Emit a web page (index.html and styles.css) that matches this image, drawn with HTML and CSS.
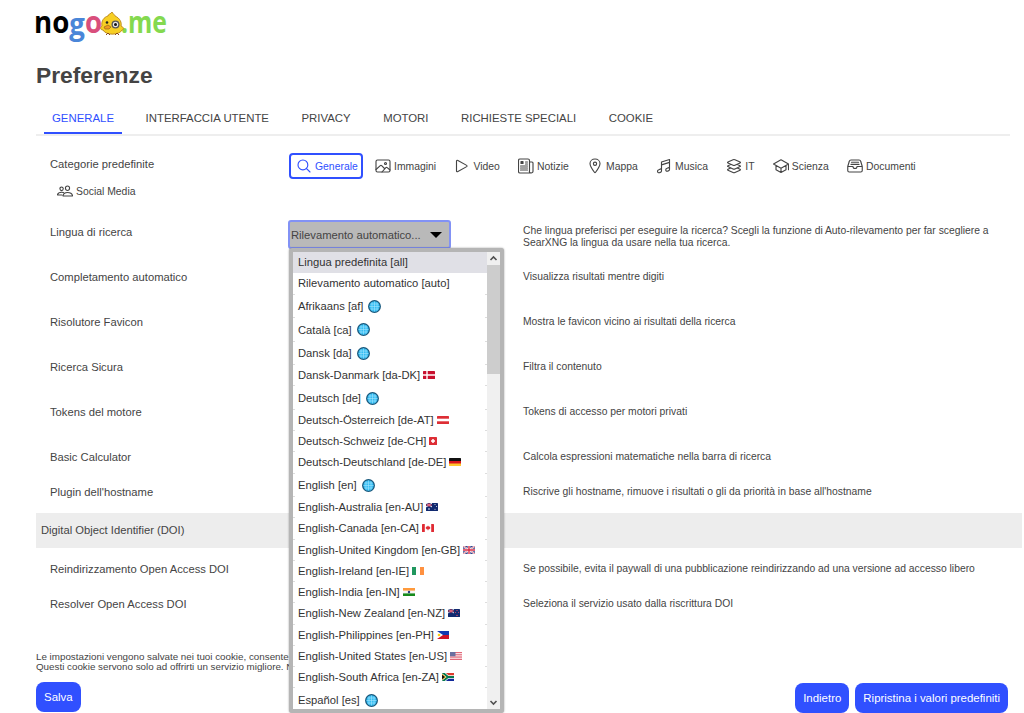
FILE: index.html
```html
<!DOCTYPE html>
<html lang="it">
<head>
    <meta charset="UTF-8">
    <meta name="viewport" content="width=device-width, initial-scale=1.0">
    <title>Preferenze</title>
    <link rel="stylesheet" href="styles.css">
</head>

<body>
    <!-- Shared flag and globe symbols -->
    <svg class="symbols">
        <symbol id="globe" viewBox="0 0 13 13">
            <circle cx="6.5" cy="6.5" r="5.8" fill="#35bdf2" stroke="#17577c" stroke-width="1.3"/>
            <path d="M6.5 1.5v10M1.5 6.5h10M2.5 4h8M2.5 9h8M4 2.4v8.2M9 2.4v8.2" stroke="#a5e6ff" stroke-width=".6" fill="none"/>
        </symbol>
        <symbol id="dk" viewBox="0 0 12 8"><rect width="12" height="8" rx=".6" fill="#c8102e"/><path d="M4 0v8M0 4h12" stroke="#fff" stroke-width="1.4"/></symbol>
        <symbol id="at" viewBox="0 0 12 8"><rect width="12" height="8" rx=".6" fill="#dd2e35"/><path d="M0 4h12" stroke="#fff" stroke-width="2.6"/></symbol>
        <symbol id="ch" viewBox="0 0 8 8"><rect width="8" height="8" rx=".6" fill="#dd2e35"/><path d="M4 2v4M2 4h4" stroke="#fff" stroke-width="1.5"/></symbol>
        <symbol id="de" viewBox="0 0 12 8"><rect width="12" height="8" rx=".6" fill="#111"/><path d="M0 3h12v3H0z" fill="#d9141c"/><path d="M0 5.5h12V8H0z" fill="#ffc62e"/></symbol>
        <symbol id="au" viewBox="0 0 12 8"><rect width="12" height="8" rx=".6" fill="#10296f"/><path d="M0 0l6 4M6 0L0 4" stroke="#fff"/><path d="M3 0v4M0 2h6" stroke="#e0405a"/><circle cx="3" cy="6" r=".8" fill="#fff"/><circle cx="9" cy="1.6" r=".5" fill="#fff"/><circle cx="9" cy="6.3" r=".5" fill="#fff"/><circle cx="10.6" cy="3.4" r=".5" fill="#fff"/></symbol>
        <symbol id="ca" viewBox="0 0 12 8"><rect width="12" height="8" rx=".6" fill="#e02b34"/><path d="M2.8 0h6.4v8H2.8z" fill="#fff"/><path d="M6 1.5l.7 1.1.8-.2 1 1.6L7 5.4H6.2V6.6h-.4V5.4H5L3.5 4l1-1.6.8.2z" fill="#e02b34"/></symbol>
        <symbol id="gb" viewBox="0 0 12 8"><rect width="12" height="8" rx=".6" fill="#33458c"/><path d="M0 0l12 8M12 0L0 8" stroke="#fff" stroke-width="1.7"/><path d="M0 0l12 8M12 0L0 8" stroke="#d92d45" stroke-width=".6"/><path d="M6 0v8M0 4h12" stroke="#fff" stroke-width="2.6"/><path d="M6 0v8M0 4h12" stroke="#d92d45" stroke-width="1.4"/></symbol>
        <symbol id="ie" viewBox="0 0 12 8"><rect width="12" height="8" rx=".6" fill="#fff"/><path d="M0 0h4v8H0z" fill="#20975e"/><path d="M8 0h4v8H8z" fill="#ff9140"/></symbol>
        <symbol id="in" viewBox="0 0 12 8"><rect width="12" height="8" rx=".6" fill="#f5f5f5"/><path d="M0 0h12v2.6H0z" fill="#ff9a3c"/><path d="M0 5.4h12V8H0z" fill="#168a1b"/><circle cx="6" cy="4" r="1.2" fill="#2a3a80"/></symbol>
        <symbol id="nz" viewBox="0 0 12 8"><rect width="12" height="8" rx=".6" fill="#10296f"/><path d="M0 0l6 4M6 0L0 4" stroke="#fff" stroke-width=".8"/><path d="M3 0v4M0 2h6" stroke="#e0405a"/><g fill="#f0506a"><circle cx="9" cy="1.5" r=".6"/><circle cx="9" cy="6.4" r=".7"/><circle cx="7.6" cy="3.5" r=".5"/><circle cx="10.6" cy="3.2" r=".5"/></g></symbol>
        <symbol id="ph" viewBox="0 0 12 8"><path d="M0 0h12v4H0z" fill="#1238b0"/><path d="M0 4h12v4H0z" fill="#ce1126"/><path d="M0 0l6 4-6 4z" fill="#fff"/><circle cx="2" cy="4" r="1.3" fill="#fcd116"/></symbol>
        <symbol id="us" viewBox="0 0 12 8"><rect width="12" height="8" rx=".6" fill="#fff"/><path d="M0 .5h12M0 2.3h12M0 4.1h12M0 5.8h12M0 7.5h12" stroke="#d94055" stroke-width=".8"/><path d="M0 0h5.5v4.3H0z" fill="#6a6f9f"/></symbol>
        <symbol id="za" viewBox="0 0 12 8"><path d="M0 0h12v4H0z" fill="#dd3a2c"/><path d="M0 4h12v4H0z" fill="#10299a"/><path d="M0-1l6 5h6M0 9l6-5" stroke="#fff" stroke-width="3.4" fill="none"/><path d="M0-1l6 5h6M0 9l6-5" stroke="#08794e" stroke-width="2" fill="none"/><path d="M0 1l4.2 3L0 7z" fill="#ffb81c"/><path d="M0 1.8L3 4 0 6.2z" fill="#111"/></symbol>
    </svg>

    <main>
        <a class="logo" href="#">
            <svg width="134" height="40" viewBox="0 0 134 40">
                <g class="logo-text">
                    <text x="-2" y="25" textLength="68" lengthAdjust="spacingAndGlyphs">no<tspan class="blue" dy="2">g</tspan><tspan class="pink" dy="-2">o</tspan></text>
                    <text x="85" y="25" textLength="46" lengthAdjust="spacingAndGlyphs" class="green">.me</text>
                </g>
                <!-- duckling -->
                <path d="M76 4c1 2 3 3 3 4 5 2 7 7 6 10 3 1 3 4 1 4-2 5-16 6-19 0-3 0-3-3-1-4-1-5 2-9 6-10 0-2 3-2 4-4z" fill="#f7cf24" stroke="#b98519" stroke-width=".9"/>
                <circle cx="79.5" cy="16.5" r="4" fill="#555"/>
                <circle cx="79.5" cy="16.5" r="2.7" fill="#e5e5e5"/>
                <circle cx="79.5" cy="16.5" r="1.5" fill="#111"/>
                <circle cx="71" cy="14.5" r="1.3" fill="#222"/>
                <path d="M68 19l4-2 3 2-2 2h-4z" fill="#ee9b22" stroke="#8b5917" stroke-width=".6"/>
                <path d="M70 27l2-2 2 2M79 27l2-2 2 2" stroke="#8b4a17" fill="none"/>
            </svg>
        </a>

        <h1>Preferenze</h1>

        <nav class="tabs">
            <a class="active" href="#">GENERALE</a>
            <a href="#">INTERFACCIA UTENTE</a>
            <a href="#">PRIVACY</a>
            <a href="#">MOTORI</a>
            <a href="#">RICHIESTE SPECIALI</a>
            <a href="#">COOKIE</a>
        </nav>

        <form>
            <div class="row row-categories">
                <div class="label">Categorie predefinite</div>
                <div class="categories">
                    <span class="cat selected">
                        <svg viewBox="0 0 512 512"><path d="M221 64a157 157 0 10157 157A157 157 0 00221 64zM338 338l110 110"/></svg>Generale</span>
                    <span class="cat">
                        <svg viewBox="0 0 512 512"><rect x="32" y="64" width="448" height="384" rx="48"/><circle cx="336" cy="176" r="32"/><path d="M304 335.8l-90.7-90.5a32 32 0 00-43.5-1.3L32 368M224 448l123.3-139.3a32 32 0 0143.2-2L480 384"/></svg>Immagini</span>
                    <span class="cat">
                        <svg viewBox="0 0 512 512"><path d="M80 95v322c0 17.4 17 28.5 31 20.2l295-161.1c13.3-7.8 13.3-32.4 0-40.2L111 74.8c-14-8.3-31 2.8-31 20.2z"/></svg>Video</span>
                    <span class="cat">
                        <svg viewBox="0 0 512 512"><path d="M368 415V80a48 48 0 00-48-48H64a48 48 0 00-48 48v352a48 48 0 0048 48h353a49 49 0 01-49-65zM416 480a60 60 0 0064-64V160a32 32 0 00-32-32h-80M240 128h64M240 192h64M80 256h224M80 320h224M80 384h224"/><path class="solid" d="M96 112h64v64H96z"/></svg>Notizie</span>
                    <span class="cat">
                        <svg viewBox="0 0 512 512"><path d="M256 32c-88 0-160 64-160 145 0 92 107 236 147 287a16 16 0 0026 0C309 413 416 269 416 177c0-81-72-145-160-145z"/><circle cx="256" cy="184" r="52"/></svg>Mappa</span>
                    <span class="cat">
                        <svg viewBox="0 0 512 512"><path d="M176 128l256-80v320c0 22-14 36-38 44l-24 8c-35 10-58-12-58-40 0-25 14-42 40-50l42-14c22-7 38-17 38-36M176 128v288c0 22-14 36-38 44l-24 8c-36 10-66-12-66-44 0-25 14-42 40-50l50-17c22-7 38-17 38-36M176 220l256-80"/></svg>Musica</span>
                    <span class="cat">
                        <svg viewBox="0 0 512 512"><path d="M450 130L285.5 55c-16.2-7.5-42.8-7.5-59 0L62 130c-17.6 8.1-17.6 21.4 0 29.5l163 75c16.8 7.7 44.4 7.7 61.2 0l163-75c18-8.1 18-21.4.8-29.5zM150 207l-88 38.3c-17.7 8.1-17.7 21.4 0 29.5l163 75c16.8 7.7 44.4 7.7 61.2 0l163-75c17.7-8.1 17.7-21.4 0-29.5L362 207M150 322l-88 38c-17.6 8-17.6 21.3 0 29.4l163 75c16.8 7.7 44.4 7.7 61.2 0l163-75c17.6-8.1 17.6-21.4 0-29.5L362 322"/></svg>IT</span>
                    <span class="cat">
                        <svg viewBox="0 0 512 512"><path d="M16 192L256 56l240 136-240 136zM96 240v136l160 88 160-88V240M496 376V192M256 328v136"/></svg>Scienza</span>
                    <span class="cat">
                        <svg viewBox="0 0 512 512"><path d="M384 64H128c-26 0-49 14-54 40L24 272v128a48 48 0 0048 48h368a48 48 0 0048-48V272l-50-168c-5-27-28-40-54-40zM24 272h168M320 272h168M192 272a64 64 0 00128 0M144 136h224M128 204h256"/></svg>Documenti</span>
                </div>
                <span class="cat social">
                    <svg viewBox="0 0 512 512"><path d="M402 168c-3 40-33 72-66 72s-63-32-66-72c-3-42 27-72 66-72s69 31 66 72zM336 304c-65 0-128 32-144 96-2 9 3 16 12 16h280c9 0 14-7 12-16-16-65-95-96-160-96zM200 186c-3 32-27 58-53 58s-51-26-53-58c-3-34 22-58 53-58s55 25 53 58zM206 306c-18-8-38-12-59-12-52 0-118 26-131 77-2 7 3 13 10 13h127"/></svg>Social Media</span>
            </div>

            <div class="row row-language">
                <div class="label">Lingua di ricerca</div>
                <div class="select-wrap">
                    <div class="select"><span>Rilevamento automatico...</span><i class="arrow"></i></div>
                    <div class="dropdown">
                        <div class="options">
                            <div class="option current">Lingua predefinita [all]</div>
                            <div class="option">Rilevamento automatico [auto]</div>
                            <div class="option tall">Afrikaans [af]<svg class="globe"><use href="#globe"/></svg></div>
                            <div class="option tall">Català [ca]<svg class="globe"><use href="#globe"/></svg></div>
                            <div class="option tall">Dansk [da]<svg class="globe"><use href="#globe"/></svg></div>
                            <div class="option">Dansk-Danmark [da-DK]<svg class="flag"><use href="#dk"/></svg></div>
                            <div class="option tall">Deutsch [de]<svg class="globe"><use href="#globe"/></svg></div>
                            <div class="option">Deutsch-Österreich [de-AT]<svg class="flag"><use href="#at"/></svg></div>
                            <div class="option">Deutsch-Schweiz [de-CH]<svg class="flag"><use href="#ch"/></svg></div>
                            <div class="option">Deutsch-Deutschland [de-DE]<svg class="flag"><use href="#de"/></svg></div>
                            <div class="option tall">English [en]<svg class="globe"><use href="#globe"/></svg></div>
                            <div class="option">English-Australia [en-AU]<svg class="flag"><use href="#au"/></svg></div>
                            <div class="option">English-Canada [en-CA]<svg class="flag"><use href="#ca"/></svg></div>
                            <div class="option">English-United Kingdom [en-GB]<svg class="flag"><use href="#gb"/></svg></div>
                            <div class="option">English-Ireland [en-IE]<svg class="flag"><use href="#ie"/></svg></div>
                            <div class="option">English-India [en-IN]<svg class="flag"><use href="#in"/></svg></div>
                            <div class="option">English-New Zealand [en-NZ]<svg class="flag"><use href="#nz"/></svg></div>
                            <div class="option">English-Philippines [en-PH]<svg class="flag"><use href="#ph"/></svg></div>
                            <div class="option">English-United States [en-US]<svg class="flag"><use href="#us"/></svg></div>
                            <div class="option">English-South Africa [en-ZA]<svg class="flag"><use href="#za"/></svg></div>
                            <div class="option tall">Español [es]<svg class="globe"><use href="#globe"/></svg></div>
                        </div>
                        <div class="scrollbar">
                            <svg viewBox="0 0 13 13"><path d="M3.5 8l3-3 3 3"/></svg>
                            <div class="thumb"></div>
                            <svg class="down" viewBox="0 0 13 13"><path d="M3.5 5l3 3 3-3"/></svg>
                        </div>
                    </div>
                </div>
                <div class="description">Che lingua preferisci per eseguire la ricerca? Scegli la funzione di Auto-rilevamento per far scegliere a<br>SearXNG la lingua da usare nella tua ricerca.</div>
            </div>
            <div class="row">
                <div class="label">Completamento automatico</div>
                <div class="description">Visualizza risultati mentre digiti</div>
            </div>
            <div class="row">
                <div class="label">Risolutore Favicon</div>
                <div class="description">Mostra le favicon vicino ai risultati della ricerca</div>
            </div>
            <div class="row">
                <div class="label">Ricerca Sicura</div>
                <div class="description">Filtra il contenuto</div>
            </div>
            <div class="row">
                <div class="label">Tokens del motore</div>
                <div class="description">Tokens di accesso per motori privati</div>
            </div>
            <div class="row">
                <div class="label">Basic Calculator</div>
                <div class="description">Calcola espressioni matematiche nella barra di ricerca</div>
            </div>
            <div class="row row-plugin">
                <div class="label">Plugin dell'hostname</div>
                <div class="description">Riscrive gli hostname, rimuove i risultati o gli da priorità in base all'hostname</div>
            </div>

            <div class="section">Digital Object Identifier (DOI)</div>

            <div class="row row-doi">
                <div class="label">Reindirizzamento Open Access DOI</div>
                <div class="description">Se possibile, evita il paywall di una pubblicazione reindirizzando ad una versione ad accesso libero</div>
            </div>
            <div class="row row-doi">
                <div class="label">Resolver Open Access DOI</div>
                <div class="description">Seleziona il servizio usato dalla riscrittura DOI</div>
            </div>

            <p class="note">Le impostazioni vengono salvate nei tuoi cookie, consente<br>Questi cookie servono solo ad offrirti un servizio migliore. N</p>

            <div class="buttons">
                <button type="button">Salva</button>
                <button type="button" class="right">Indietro</button>
                <button type="button" class="reset">Ripristina i valori predefiniti</button>
            </div>
        </form>
    </main>
</body>
</html>
```
FILE: styles.css
```css
* {
    box-sizing: border-box;
}

body {
    margin: 0;
    height: 713px;
    overflow: hidden;
    background-color: #fff;
    color: #444;
    font-family: "Liberation Sans", Arial, sans-serif;
    font-size: 11.22px;
}

.symbols {
    display: none;
}

main {
    padding: 8px 2px 0 36px;
}

.logo {
    display: block;
    height: 40px;
}

.logo svg {
    display: block;
    overflow: visible;
}

.logo-text {
    font-family: "Open Sans", sans-serif;
    font-size: 31px;
    font-weight: 700;
}

.blue {
    fill: #4a86d8;
}

.pink {
    fill: #d94f7c;
}

.green {
    fill: #84d94f;
}

h1 {
    margin: 13px 0 0;
    height: 28px;
    line-height: 28px;
    font-size: 22.8px;
}

/* Tabs */
.tabs {
    display: flex;
    gap: 16.5px;
    margin: 13px 12px 0 0;
    padding-left: 8px;
    height: 34px;
    border-bottom: 2px solid #eee;
}

.tabs a {
    height: 32px;
    padding: 0 8px;
    line-height: 32px;
    font-size: 11.4px;
    color: #444;
    text-decoration: none;
}

.tabs a.active {
    margin-right: -1px;
    color: #3050ff;
    border-bottom: 2px solid #3050ff;
}

/* Preference rows */
.row {
    display: grid;
    grid-template-columns: 238px 235px 1fr;
    align-items: center;
    height: 45px;
    padding-left: 14px;
}

.description {
    grid-column: 3;
    font-size: 10.33px;
    line-height: 12px;
}

.row-language .description {
    padding-top: 11px;
}

.row-categories {
    grid-template-columns: 238px 1fr;
    grid-template-rows: 26px 24px;
    align-content: start;
    height: 73px;
    padding-top: 17px;
}

.row-categories .label {
    margin-top: -4px;
}

.categories {
    display: flex;
    gap: 4.25px;
    padding-left: 1px;
}

.cat {
    display: flex;
    align-items: center;
    gap: 3px;
    height: 26px;
    padding: 0 4px 0 6px;
    border: 2px solid transparent;
    border-radius: 4px;
    font-size: 10.4px;
}

.cat svg {
    width: 16px;
    height: 16px;
    fill: none;
    stroke: currentColor;
    stroke-width: 36;
    stroke-linecap: round;
    stroke-linejoin: round;
}

.cat .solid {
    fill: currentColor;
}

.cat.selected {
    padding: 0 3px 0 5px;
    color: #3050ff;
    border-color: #3050ff;
}

.social {
    grid-column: 1;
    padding-left: 5px;
}

.row-plugin {
    height: 27px;
    padding-bottom: 1px;
}

.row-doi {
    height: 35px;
}

.section {
    height: 35px;
    margin: 7px 0 3px;
    padding-left: 5px;
    line-height: 35px;
    background-color: #ededed;
}

/* Language select */
.select-wrap {
    position: relative;
    align-self: start;
    padding-top: 11px;
}

.select {
    display: flex;
    align-items: center;
    justify-content: space-between;
    width: 163px;
    height: 29px;
    padding: 0 7px 0 1px;
    border: 2px solid #8292f5;
    border-radius: 3px;
    background-color: #b9b9b9;
}

.arrow {
    border: 6px solid transparent;
    border-top-color: #000;
    border-bottom: 0;
}

.dropdown {
    position: absolute;
    z-index: 1;
    top: 39px;
    left: 1px;
    display: flex;
    width: 215px;
    height: 465px;
    border: 4px solid #b5b5b5;
    border-radius: 3px;
    background-color: #fff;
    box-shadow: 0 0 2px rgba(0, 0, 0, 0.4);
    overflow: hidden;
}

.options {
    flex: 1;
    overflow: hidden;
}

.option {
    display: flex;
    align-items: center;
    height: 21.25px;
    padding: 0 0 1px 5px;
    color: #333;
    white-space: nowrap;
    /* small ticks at both ends of each row */
    background: linear-gradient(90deg, #ddd 2px, transparent 2px, transparent calc(100% - 2px), #ddd calc(100% - 2px)) bottom / 100% 1px no-repeat;
}

.option.tall {
    height: 23.5px;
    padding-bottom: 0;
}

.option.current {
    background: #e0e0e6;
}

.flag {
    width: 12px;
    height: 8px;
    margin-left: 3px;
}

.flag:has([href="#ch"]) {
    width: 8px;
}

.globe {
    width: 13px;
    height: 13px;
    margin-left: 5px;
}

.scrollbar {
    display: flex;
    flex-direction: column;
    width: 13px;
    background-color: #f0f0f0;
}

.scrollbar svg {
    width: 13px;
    height: 13px;
    fill: none;
    stroke: #505050;
    stroke-width: 1.6;
}

.thumb {
    height: 109px;
    background-color: #cdcdcd;
}

.scrollbar .down {
    margin-top: auto;
}

/* Footer */
.note {
    margin: 31px 0 0;
    font-size: 9.8px;
    line-height: 10px;
}

.buttons {
    display: flex;
    gap: 6px;
    margin-top: 10px;
    padding-right: 14px;
}

button {
    height: 30px;
    padding: 0 8px;
    border: 0;
    border-radius: 8px;
    background-color: #3050ff;
    color: #fff;
    font-family: inherit;
    font-size: 11.45px;
}

.right {
    margin: 1px 0 0 auto;
}

.reset {
    margin-top: 1px;
}
```
